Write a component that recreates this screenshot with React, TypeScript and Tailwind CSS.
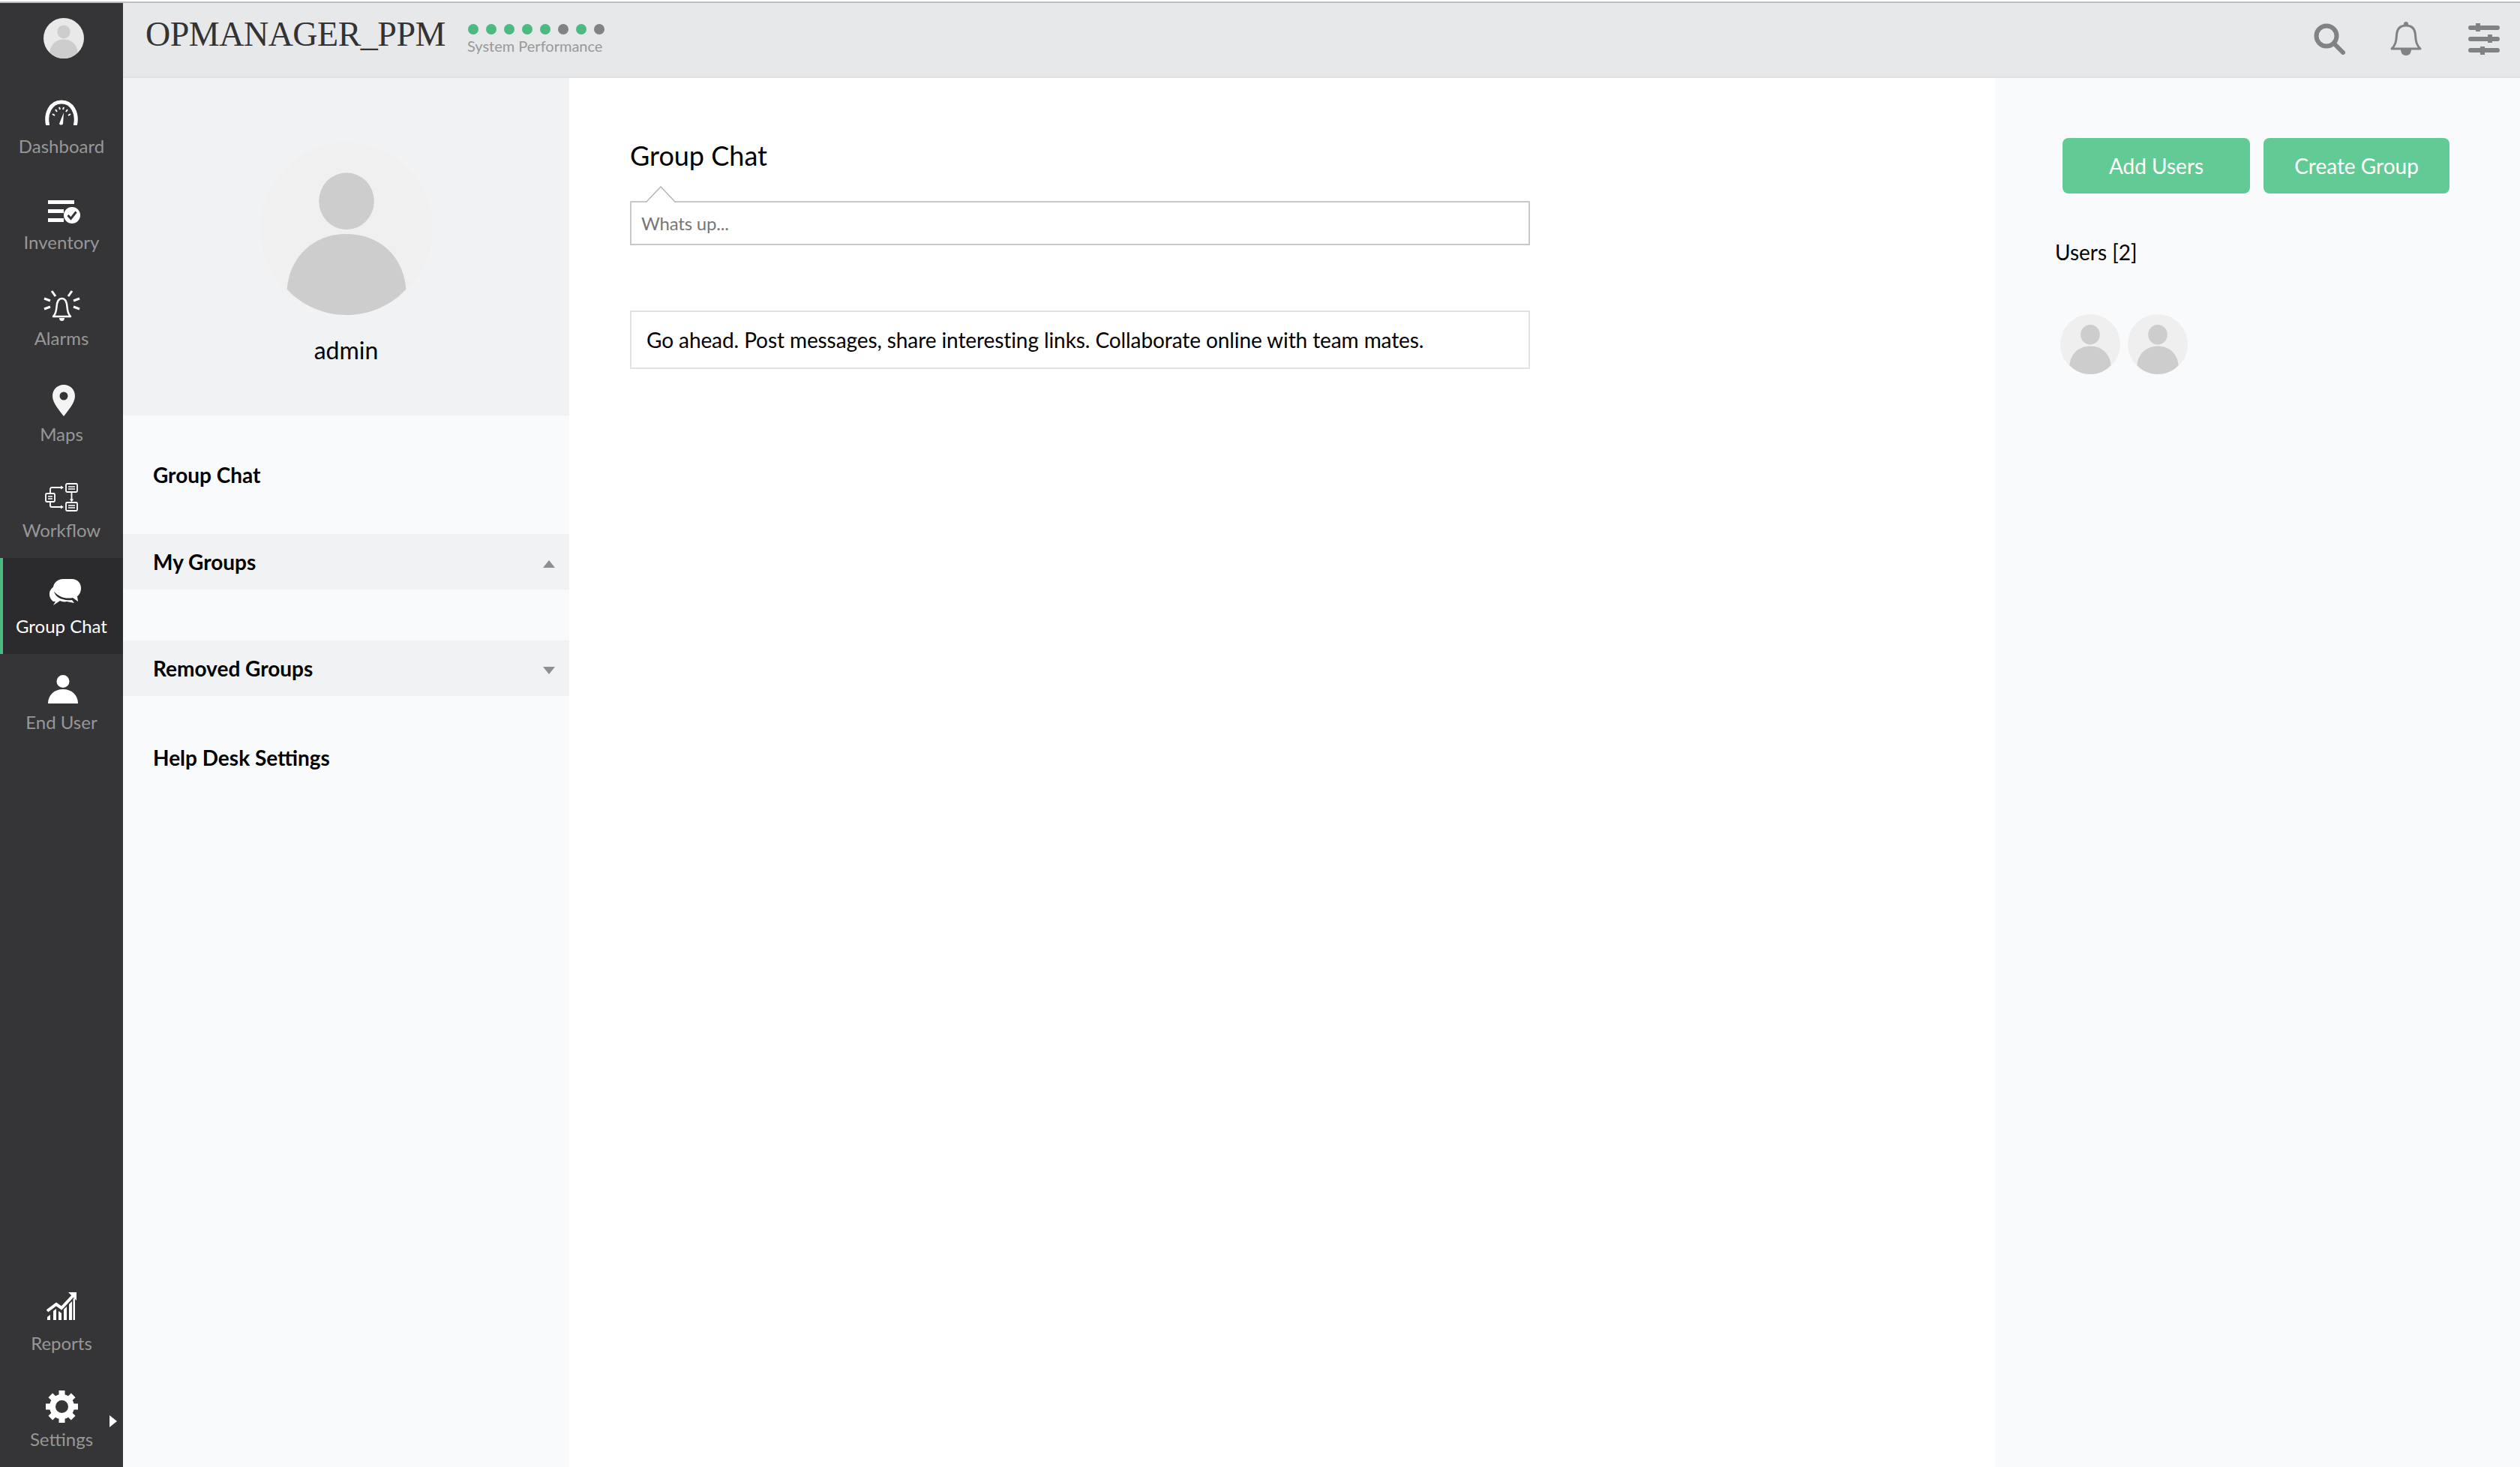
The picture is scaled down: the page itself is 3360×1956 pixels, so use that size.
import type { ReactNode } from "react";

function Avatar({ className, bg = "#efefef" }: { className: string; bg?: string }) {
  return (
    <svg viewBox="0 0 100 100" className={className}>
      <circle cx="50" cy="50" r="50" fill={bg} />
      <ellipse cx="50" cy="34" rx="16" ry="16.5" fill="#cdcdcd" />
      <path d="M15.5 85C17 66 31 53 50 53s33 13 34.500 32C76 94.500 63 100 50 100S24 94.500 15.500 85Z" fill="#cdcdcd" />
    </svg>
  );
}

function DashboardIcon() {
  return (
    <svg viewBox="0 0 46 34" className="w-[46px] h-[34px]" fill="none" stroke="#fff">
      <path d="M4.500 33C1.500 19 8 3 23 3s21.500 16 18.500 30" strokeWidth="5" strokeLinecap="round" />
      <path d="M11 19l3 2M15 13l2 3M20 10l1 3M26 10l-1 3M31 13l-2 3M35 19l-3 2" strokeWidth="2" />
      <path d="M26 17l-1 15c-1 2-4 2-5 0Z" fill="#fff" stroke="none" />
    </svg>
  );
}

function InventoryIcon() {
  return (
    <svg viewBox="0 0 43 31" className="w-[43px] h-[31px]">
      <rect x="0" y="0" width="35" height="5" fill="#fff" />
      <rect x="0" y="12" width="21" height="5" fill="#fff" />
      <rect x="0" y="24" width="21" height="5" fill="#fff" />
      <circle cx="32" cy="20" r="11" fill="#fff" />
      <path d="M26.500 20l4 4.500 7-9" fill="none" stroke="#353537" strokeWidth="3" />
    </svg>
  );
}

function AlarmIcon() {
  return (
    <svg viewBox="0 0 49 41" className="w-[49px] h-[41px]" fill="none" stroke="#fff">
      <path d="M13 35h23c-3-3-4-6-4.500-13C31 15 29 11 24.500 11S18 15 17.500 22C17 29 16 32 13 35Z" strokeWidth="2.500" strokeLinejoin="round" />
      <path d="M21 37h7c0 3-2 4-3.500 4S21 40 21 37Z" fill="#fff" stroke="none" />
      <path d="M11 1l5 7M38 1l-5 7M1 11l8 3M48 11l-8 3M1 25l8-3M48 25l-8-3" strokeWidth="3" />
    </svg>
  );
}

function MapsIcon() {
  return (
    <svg viewBox="0 0 30 42" className="w-[30px] h-[42px]">
      <path fillRule="evenodd" d="M15 0c8.500 0 15 6.500 15 15 0 9-9 19-15 27C9 34 0 24 0 15 0 6.500 6.500 0 15 0Zm0 9.500a5.500 5.500 0 1 0 0 11 5.500 5.500 0 0 0 0-11Z" fill="#f4f4f4" />
    </svg>
  );
}

function WorkflowIcon() {
  return (
    <svg viewBox="0 0 44 38" className="w-[44px] h-[38px]" fill="none" stroke="#fff" strokeWidth="1.800">
      <rect x="28" y="1" width="15" height="11" rx="1.500" />
      <rect x="28" y="26" width="15" height="11" rx="1.500" />
      <rect x="1" y="14" width="12" height="11" rx="1.500" />
      <path d="M31 5h9M31 8h9M31 30h9M31 33h9M4 18h6M4 21h6" strokeWidth="1.500" />
      <path d="M7 14V8c0-1 1-2 2-2h13M7 25v5c0 1 1 2 2 2h13M35.500 12v11" />
      <path d="M21 3.500l4 2.500-4 2.500ZM21 29.500l4 2.500-4 2.500ZM33 21.500h5L35.500 25.500Z" fill="#fff" stroke="none" />
    </svg>
  );
}

function ChatIcon() {
  return (
    <svg viewBox="0 0 42 38" className="w-[42px] h-[38px]">
      <path d="M5 30C1 27 0 23 0 20c0-5 3-8 6-10-1 6 1 11 5 14 4 3 12 5 19 4l3 4-10-2c-3 1-7 0-9-1l-9 6 3-5Z" fill="#fff" />
      <path d="M18 0h12c7 0 12 5 12 12 0 5-2 9-5 11l1 7-7-5c-4 1-12 1-17-2C9 20 5 17 5 12 5 5 11 0 18 0Z" fill="#fff" />
    </svg>
  );
}

function UserIcon() {
  return (
    <svg viewBox="0 0 40 38" className="w-[40px] h-[38px]" fill="#fff">
      <circle cx="20" cy="8.500" r="8.500" />
      <path d="M0 38c0-11 8-19 20-19s20 8 20 19Z" />
    </svg>
  );
}

function ReportsIcon() {
  return (
    <svg viewBox="0 0 40 37" className="w-[40px] h-[37px]">
      <path d="M1 25l12-9 7 5L35 5" fill="none" stroke="#fff" strokeWidth="4" />
      <path d="M29 0h11v11Z" fill="#fff" />
      <path d="M1 37v-4l4-3v7ZM9 37V25l4-3v15ZM16 37V25l4 3v9ZM23 37V23l4-4v18ZM30 37V16l4-4v25ZM35.500 37V9l2.500-2v30Z" fill="#fff" />
    </svg>
  );
}

function SettingsIcon() {
  return (
    <svg viewBox="0 0 45 45" className="w-[45px] h-[45px]" fill="none" stroke="#fff">
      <circle cx="22.500" cy="22.500" r="12.500" strokeWidth="8" />
      <path d="M22.500 1v8M22.500 36v8M1 22.500h8M36 22.500h8M7.300 7.300l5.600 5.600M32.100 32.100l5.600 5.600M37.700 7.300l-5.600 5.600M12.900 32.100l-5.600 5.600" strokeWidth="8" />
    </svg>
  );
}

function NavItem({ label, icon, top, active }: { label: string; icon: ReactNode; top: string; active?: boolean }) {
  return (
    <div className={active ? "h-[128px] flex flex-col items-center bg-[#2b2b2d] border-l-4 border-[#4cb981] pr-1" : "h-[128px] flex flex-col items-center"}>
      <div className={`h-[72px] ${top}`}>{icon}</div>
      <span className={active ? "text-[24px] leading-[38px] text-white" : "text-[24px] leading-[38px] text-[#979797]"}>{label}</span>
    </div>
  );
}

export default function App() {
  return (
    <div className="flex flex-col h-[1956px] w-[3360px] overflow-hidden bg-white font-['Lato','Noto_Sans',sans-serif] text-black">
      <div className="h-1 shrink-0 bg-white border-b-2 border-[#bdbdbd]" />
      <div className="flex flex-1 min-h-0">
        {/* Sidebar */}
        <aside className="w-[164px] shrink-0 flex flex-col bg-[#353537]">
          <div className="h-[100px] flex justify-center pt-5 pl-[6px]">
            <Avatar className="w-[54px] h-[54px]" bg="#e9e9e9" />
          </div>
          <NavItem label="Dashboard" icon={<DashboardIcon />} top="pt-[29px]" />
          <NavItem label="Inventory" icon={<InventoryIcon />} top="pt-[35px] pl-[7px]" />
          <NavItem label="Alarms" icon={<AlarmIcon />} top="pt-[27px] pl-px" />
          <NavItem label="Maps" icon={<MapsIcon />} top="pt-[25px] pl-[6px]" />
          <NavItem label="Workflow" icon={<WorkflowIcon />} top="pt-[28px]" />
          <NavItem label="Group Chat" icon={<ChatIcon />} top="pt-[28px] pl-[10px]" active />
          <NavItem label="End User" icon={<UserIcon />} top="pt-[28px] pl-1" />
          <div className="mt-auto">
            <NavItem label="Reports" icon={<ReportsIcon />} top="pt-[23px]" />
            <div className="relative">
              <NavItem label="Settings" icon={<SettingsIcon />} top="pt-[25px]" />
              <div className="absolute left-[146px] top-[59px] border-y-[8px] border-l-[10px] border-y-transparent border-l-white" />
            </div>
          </div>
        </aside>

        <div className="flex-1 flex flex-col min-w-0">
          {/* Top bar */}
          <header className="h-[100px] shrink-0 flex items-center pl-[30px] pr-[27px] bg-[#e7e8ea] border-b-2 border-[#e1e2e4]">
            <h1 className="font-['Liberation_Serif',serif] text-[46px] leading-none text-[#333] -mt-[15px] -tracking-[0.5px]">OPMANAGER_PPM</h1>
            <div className="ml-[29px] -mt-[2px] flex flex-col">
              <div className="flex gap-[10px] pl-px">
                <span className="w-[14px] h-[14px] rounded-full bg-[#4cb981]" />
                <span className="w-[14px] h-[14px] rounded-full bg-[#4cb981]" />
                <span className="w-[14px] h-[14px] rounded-full bg-[#4cb981]" />
                <span className="w-[14px] h-[14px] rounded-full bg-[#4cb981]" />
                <span className="w-[14px] h-[14px] rounded-full bg-[#4cb981]" />
                <span className="w-[14px] h-[14px] rounded-full bg-[#808285]" />
                <span className="w-[14px] h-[14px] rounded-full bg-[#4cb981]" />
                <span className="w-[14px] h-[14px] rounded-full bg-[#808285]" />
              </div>
              <span className="text-[20px] leading-6 mt-[3px] text-[#999]">System Performance</span>
            </div>
            <div className="ml-auto flex items-center gap-[60px] -mt-[2px]">
              <svg viewBox="0 0 42 42" className="w-[42px] h-[42px] -translate-x-[2px]" fill="none" stroke="#808285">
                <circle cx="17" cy="17" r="13.500" strokeWidth="6" />
                <path d="M27 27l12 12" strokeWidth="6" strokeLinecap="round" />
              </svg>
              <svg viewBox="0 0 42 46" className="w-[42px] h-[46px] -translate-x-[2px]" fill="none" stroke="#808285">
                <path d="M2 36c5-5 6-10 6.500-18C9 9 14 5 21 5s12 4 12.500 13c.5 8 1.500 13 6.500 18Z" strokeWidth="3" strokeLinejoin="round" />
                <circle cx="21" cy="3" r="3" fill="#808285" stroke="none" />
                <path d="M14 37h14c0 5-3 8-7 8s-7-3-7-8Z" fill="#808285" stroke="none" />
              </svg>
              <svg viewBox="0 0 42 42" className="w-[42px] h-[42px]" fill="#808285">
                <rect x="0" y="3" width="42" height="6" rx="3" />
                <rect x="10" y="0" width="6" height="11" />
                <rect x="0" y="18" width="42" height="6" rx="3" />
                <rect x="26" y="15" width="6" height="11" />
                <rect x="0" y="33" width="42" height="6" rx="3" />
                <rect x="16" y="31" width="6" height="11" />
              </svg>
            </div>
          </header>

          <div className="flex flex-1 min-h-0">
            {/* Left panel */}
            <nav className="w-[595px] shrink-0 bg-[#f9fafc]">
              <div className="h-[450px] flex flex-col items-center pt-[86px] bg-[#f1f2f4]">
                <Avatar className="w-[230px] h-[230px]" bg="#f0f0f0" />
                <span className="mt-[27px] text-[32px] leading-10">admin</span>
              </div>
              <div className="h-[158px] flex items-center pl-10 text-[28px] font-bold">Group Chat</div>
              <div className="h-[74px] flex items-center justify-between pl-10 pr-[19px] text-[28px] font-bold bg-[#f1f2f4]">
                My Groups
                <span className="mt-[6px] border-x-[8px] border-b-[10px] border-x-transparent border-b-[#8f8f8f]" />
              </div>
              <div className="h-[68px]" />
              <div className="h-[74px] flex items-center justify-between pl-10 pr-[19px] text-[28px] font-bold bg-[#f1f2f4]">
                Removed Groups
                <span className="mt-[6px] border-x-[8px] border-t-[10px] border-x-transparent border-t-[#8f8f8f]" />
              </div>
              <div className="h-[164px] flex items-center pl-10 text-[28px] font-bold">Help Desk Settings</div>
            </nav>

            {/* Main */}
            <main className="w-[1901px] shrink-0 pl-[81px] pt-[80px] bg-white">
              <h2 className="text-[36px] leading-[46px]">Group Chat</h2>
              <div className="relative mt-[38px] w-[1200px] h-[59px] flex items-center pl-[13px] border-2 border-[#c8c8c8] text-[24px] tracking-[-0.2px] text-[#777]">
                <svg viewBox="0 0 40 22" className="absolute -top-[22px] left-[19px] w-[40px] h-[22px]">
                  <path d="M0 22L20 1l20 21" fill="#fff" stroke="#b5b5b5" strokeWidth="1.500" />
                </svg>
                Whats up...
              </div>
              <div className="mt-[87px] w-[1200px] h-[78px] flex items-center pl-5 border-2 border-[#e2e2e2] text-[28px] tracking-[-0.09px]">
                Go ahead. Post messages, share interesting links. Collaborate online with team mates.
              </div>
            </main>

            {/* Right panel */}
            <aside className="flex-1 pt-[80px] pl-[80px] bg-[#f9fafc]">
              <div className="flex gap-[18px] pl-[10px]">
                <button className="w-[250px] h-[74px] rounded-lg bg-[#62cb95] text-white text-[28px]">Add Users</button>
                <button className="w-[248px] h-[74px] rounded-lg bg-[#62cb95] text-white text-[28px]">Create Group</button>
              </div>
              <p className="mt-[58px] text-[28px] leading-10">Users [2]</p>
              <div className="mt-[63px] flex gap-[10px] pl-[7px]">
                <Avatar className="w-[80px] h-[80px]" />
                <Avatar className="w-[80px] h-[80px]" />
              </div>
            </aside>
          </div>
        </div>
      </div>
    </div>
  );
}
